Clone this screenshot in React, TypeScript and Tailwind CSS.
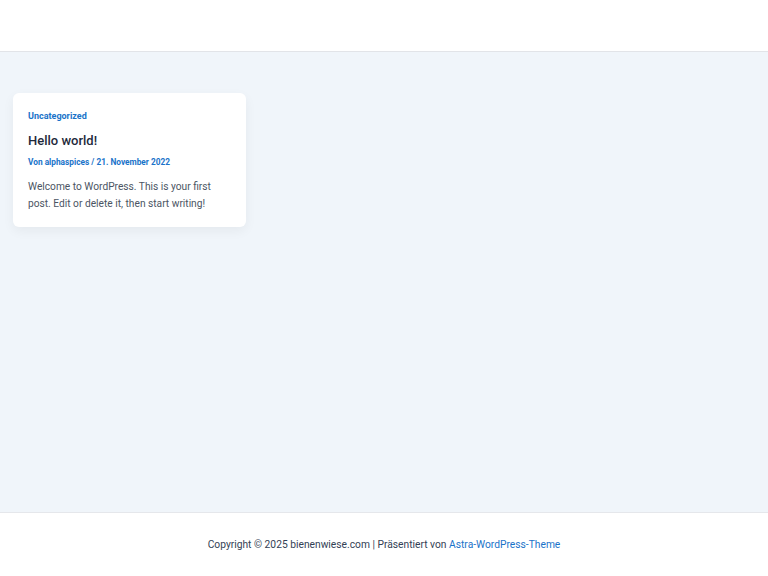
export default function App() {
  return (
    <div className="flex min-h-[576px] flex-col bg-white" style={{ fontFamily: "Roboto, 'Liberation Sans', sans-serif" }}>
      <header className="h-[52px] border-b border-[#e2e4e8] bg-white" />
      <main className="h-[460px] bg-[#f0f5fa] px-[13px] pt-[41px]">
        <article className="w-[233px] rounded-[6px] bg-white px-[15px] pt-[15px] pb-[15px] shadow-[0_4px_12px_rgba(0,0,0,0.05)]">
          <div className="text-[9px] font-bold leading-[16px] text-[#1a73c9]">Uncategorized</div>
          <h2 className="mt-[8px] text-[13px] font-medium leading-[18px] text-[#1e293b]">Hello world!</h2>
          <div className="mt-[6px] text-[8.3px] font-bold leading-[12px] text-[#1a73c9]">Von alphaspices / 21. November 2022</div>
          <p className="mt-[10px] text-[10.2px] leading-[17px] text-[#4b5563]">
            Welcome to WordPress. This is your first post. Edit or delete it, then start writing!
          </p>
        </article>
      </main>
      <footer className="flex h-[64px] items-center justify-center border-t border-[#e5e7eb] bg-white text-[10.25px] text-[#334155]">
        <span>
          Copyright © 2025 bienenwiese.com | Präsentiert von <a className="text-[#1a73c9]">Astra-WordPress-Theme</a>
        </span>
      </footer>
    </div>
  );
}
